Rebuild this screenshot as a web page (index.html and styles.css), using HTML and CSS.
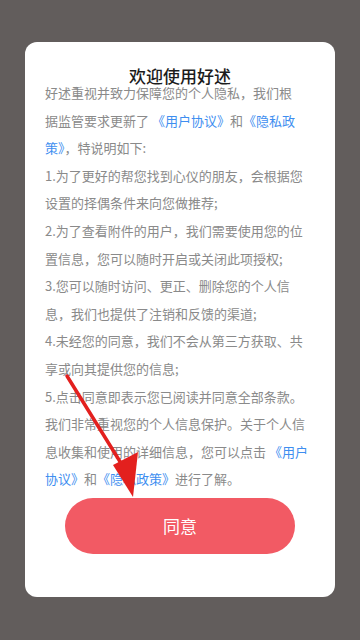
FILE: index.html
```html
<!DOCTYPE html>
<html>
<head lang="zh">
    <meta charset="UTF-8">
    <title>欢迎使用好述</title>
    <link rel="stylesheet" href="styles.css">
</head>
<body>
<div class="dialog">
    <h1 class="title">欢迎使用好述</h1>
    <div class="content">
        <p>好述重视并致力保障您的个人隐私，我们根<br>据监管要求更新了 <a>《用户协议》</a>和<a>《隐私政<br>策》</a>，特说明如下:</p>
        <p>1.为了更好的帮您找到心仪的朋友，会根据您<br>设置的择偶条件来向您做推荐;</p>
        <p>2.为了查看附件的用户，我们需要使用您的位<br>置信息，您可以随时开启或关闭此项授权;</p>
        <p>3.您可以随时访问、更正、删除您的个人信<br>息，我们也提供了注销和反馈的渠道;</p>
        <p>4.未经您的同意，我们不会从第三方获取、共<br>享或向其提供您的信息;</p>
        <p>5.点击同意即表示您已阅读并同意全部条款。<br>我们非常重视您的个人信息保护。关于个人信<br>息收集和使用的详细信息，您可以点击 <a>《用户<br>协议》</a>和<a>《隐私政策》</a>进行了解。</p>
    </div>
    <div class="btn">同意</div>
</div>

<!-- 标注箭头 -->
<svg class="arrow" width="360" height="640" viewBox="0 0 360 640">
    <line x1="67" y1="376" x2="124" y2="468" stroke="#e3201e" stroke-width="3.5" stroke-linecap="round"/>
    <polygon points="113,465 138,452 133,497" fill="#e3201e"/>
</svg>
</body>
</html>
```

FILE: styles.css
```css
*{
    margin: 0;
    padding: 0;
}
body{
    width: 360px;
    height: 640px;
    background: #625d5c;
    font-family: "Noto Sans CJK SC", "Noto Sans", sans-serif;
    position: relative;
    overflow: hidden;
}
.dialog{
    width: 310px;
    height: 555px;
    margin: 42px 0 0 25px;
    background: #fff;
    border-radius: 12px;
    padding-top: 24px;
    box-sizing: border-box;
}
.title{
    font-size: 17px;
    line-height: 20px;
    font-weight: 500;
    color: #1c1c1c;
    text-align: center;
    margin-bottom: -7px;
}
.content{
    padding: 0 20px;
    font-size: 13px;
    line-height: 27.6px;
    color: #8a8a8a;
    white-space: nowrap;
}
.content a{
    color: #3e8ef0;
}
.btn{
    width: 230px;
    height: 56px;
    margin: 5px auto 0;
    background: #f25a64;
    border-radius: 28px;
    color: #fff;
    font-size: 17px;
    line-height: 56px;
    text-align: center;
}
.arrow{
    position: absolute;
    top: 0;
    left: 0;
    pointer-events: none;
}
```
